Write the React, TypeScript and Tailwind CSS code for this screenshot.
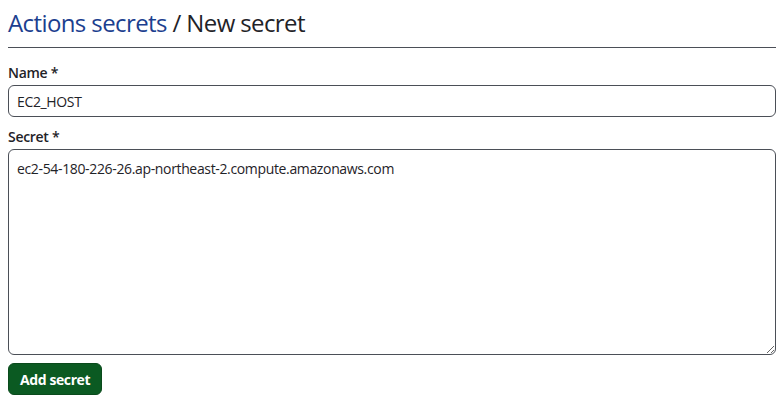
export default function App() {
  return (
    <div className="min-h-screen bg-white px-2 text-[#1f2328]" style={{ fontFamily: '"Segoe UI", "Open Sans", "Noto Sans", sans-serif' }}>
      {/* Header */}
      <h1 className="pt-[8px] pb-[9px] text-[24px] leading-[30px] font-normal tracking-[-0.6px] border-b border-[#4b4f57]">
        <a href="#" className="text-[#1c3f8f]">Actions secrets</a>
        <span> / New secret</span>
      </h1>

      <form className="pt-[15px]" onSubmit={(e) => e.preventDefault()}>
        <label className="block text-[14px] leading-[20px] font-semibold tracking-[-0.3px] mb-[2px]">Name *</label>
        <input
          type="text"
          defaultValue="EC2_HOST"
          className="block w-full h-[32px] px-[8px] text-[14px] tracking-[-0.35px] border border-[#4b4f57] rounded-[6px] outline-none"
        />

        <label className="block mt-[10px] text-[14px] leading-[20px] font-semibold tracking-[-0.3px] mb-[2px]">Secret *</label>
        <textarea
          defaultValue="ec2-54-180-226-26.ap-northeast-2.compute.amazonaws.com"
          className="block w-full h-[206px] px-[8px] pt-[9px] pb-[8px] text-[14px] leading-[20px] tracking-[-0.35px] border border-[#4b4f57] rounded-[6px] outline-none resize-y"
        />

        <button
          type="submit"
          className="mt-[8px] h-[32px] px-[11px] rounded-[6px] bg-[#0b5a22] border border-[#0a4a1c] text-white text-[14px] font-bold tracking-[-0.4px]"
        >
          Add secret
        </button>
      </form>
    </div>
  );
}
